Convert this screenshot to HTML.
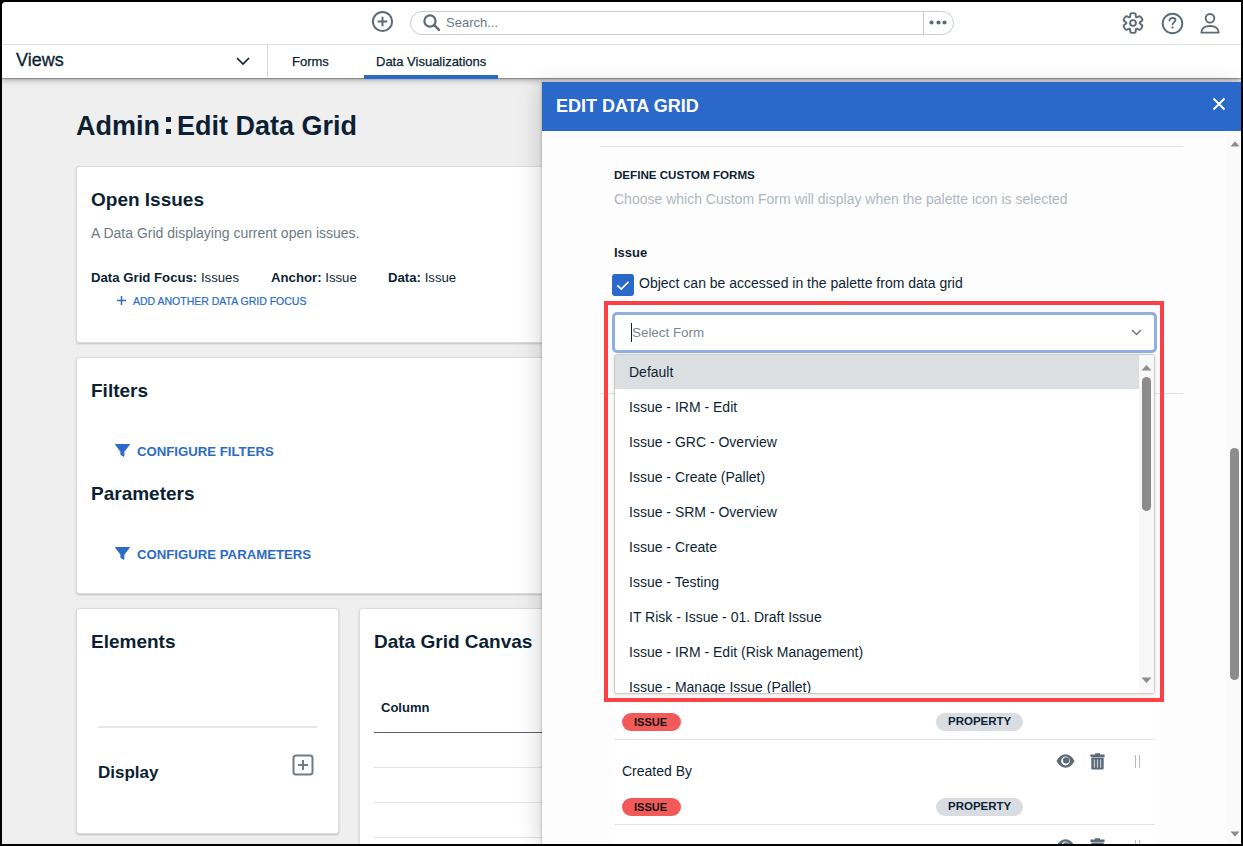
<!DOCTYPE html>
<html><head><meta charset="utf-8">
<style>
*{box-sizing:border-box;margin:0;padding:0}
html,body{width:1243px;height:846px;overflow:hidden;background:#000;font-family:"Liberation Sans",sans-serif}
.r{position:absolute}
.t{position:absolute;white-space:nowrap}
b{font-weight:bold}
</style></head><body>
<div class="r" style="left:0px;top:0px;width:1243px;height:846px;background:#000"></div>
<div class="r" style="left:2px;top:2px;width:1239px;height:842px;background:#efefef;border-top-left-radius:4px;overflow:hidden"></div>
<div class="r" style="left:2px;top:45px;width:1239px;height:33px;background:#fff;box-shadow:0 1px 1px rgba(0,0,0,.25), 0 2px 6px rgba(0,0,0,.32)"></div>
<div class="r" style="left:2px;top:2px;width:1239px;height:42px;background:#fff;border-top-left-radius:4px"></div>
<div class="r" style="left:2px;top:44px;width:1239px;height:1px;background:#dde1e4"></div>
<svg class="r" style="left:371px;top:10px" width="23" height="23" viewBox="0 0 23 23"><circle cx="11.5" cy="11.5" r="9.6" fill="none" stroke="#5b6b78" stroke-width="2"/><path d="M11.5 6.8v9.4M6.8 11.5h9.4" stroke="#5b6b78" stroke-width="2"/></svg>
<div class="r" style="left:410px;top:11px;width:544px;height:24px;border:1px solid #c9cdd1;border-radius:12px;background:#fff"></div>
<div class="r" style="left:923px;top:12px;width:1px;height:22px;background:#c9cdd1"></div>
<svg class="r" style="left:422px;top:13px" width="20" height="19" viewBox="0 0 20 19"><circle cx="8" cy="8" r="5.6" fill="none" stroke="#5b6b78" stroke-width="2.2"/><path d="M12.2 12.2l4.8 4.6" stroke="#5b6b78" stroke-width="2.4" stroke-linecap="round"/></svg>
<div class="t" style="left:446px;top:16.00px;font-size:13px;line-height:13px;font-weight:normal;color:#6b7884;">Search...</div>
<svg class="r" style="left:929.0px;top:19.5px" width="5" height="5" viewBox="0 0 5 5"><circle cx="2.5" cy="2.5" r="2.1" fill="#5b6b78"/></svg>
<svg class="r" style="left:935.7px;top:19.5px" width="5" height="5" viewBox="0 0 5 5"><circle cx="2.5" cy="2.5" r="2.1" fill="#5b6b78"/></svg>
<svg class="r" style="left:942.3px;top:19.5px" width="5" height="5" viewBox="0 0 5 5"><circle cx="2.5" cy="2.5" r="2.1" fill="#5b6b78"/></svg>
<svg class="r" style="left:1121px;top:11px" width="24" height="24" viewBox="0 0 24 24"><path d="M8.43 6.41 Q8.80 6.46 8.94 6.12 L9.01 5.95 Q9.15 5.61 9.24 4.22 L9.28 3.53 Q9.36 2.15 11.47 2.15 L12.53 2.15 Q14.64 2.15 14.72 3.53 L14.76 4.22 Q14.85 5.61 14.99 5.95 L15.06 6.12 Q15.20 6.46 15.57 6.41 L15.75 6.39 Q16.11 6.34 17.35 5.72 L17.97 5.41 Q19.21 4.79 20.27 6.62 L20.80 7.53 Q21.85 9.36 20.70 10.12 L20.12 10.50 Q18.96 11.27 18.74 11.56 L18.62 11.71 Q18.40 12.00 18.62 12.29 L18.74 12.44 Q18.96 12.73 20.12 13.50 L20.70 13.88 Q21.85 14.64 20.80 16.47 L20.27 17.38 Q19.21 19.21 17.97 18.59 L17.35 18.28 Q16.11 17.66 15.75 17.61 L15.57 17.59 Q15.20 17.54 15.06 17.88 L14.99 18.05 Q14.85 18.39 14.76 19.78 L14.72 20.47 Q14.64 21.85 12.53 21.85 L11.47 21.85 Q9.36 21.85 9.28 20.47 L9.24 19.78 Q9.15 18.39 9.01 18.05 L8.94 17.88 Q8.80 17.54 8.43 17.59 L8.25 17.61 Q7.89 17.66 6.65 18.28 L6.03 18.59 Q4.79 19.21 3.73 17.38 L3.20 16.47 Q2.15 14.64 3.30 13.88 L3.88 13.50 Q5.04 12.73 5.26 12.44 L5.38 12.29 Q5.60 12.00 5.38 11.71 L5.26 11.56 Q5.04 11.27 3.88 10.50 L3.30 10.12 Q2.15 9.36 3.20 7.53 L3.73 6.62 Q4.79 4.79 6.03 5.41 L6.65 5.72 Q7.89 6.34 8.25 6.39 Z" fill="none" stroke="#5b6b78" stroke-width="1.9" stroke-linejoin="round"/><circle cx="12" cy="12" r="2.9" fill="none" stroke="#5b6b78" stroke-width="1.9"/></svg>
<svg class="r" style="left:1161px;top:12px" width="23" height="23" viewBox="0 0 23 23"><circle cx="11.5" cy="11.5" r="9.8" fill="none" stroke="#5b6b78" stroke-width="1.9"/><path d="M8.5 8.6C8.5 6.9 9.8 6 11.5 6S14.5 6.9 14.5 8.3C14.5 10.1 11.6 10.4 11.6 12.3" fill="none" stroke="#5b6b78" stroke-width="1.9" stroke-linecap="round"/><rect x="10.4" y="14.4" width="2.3" height="2.1" rx="1" fill="#5b6b78"/></svg>
<svg class="r" style="left:1199px;top:12px" width="22" height="23" viewBox="0 0 22 23"><circle cx="11" cy="6.3" r="4.3" fill="none" stroke="#5b6b78" stroke-width="1.9"/><path d="M2.3 20.6c0-4 3.6-6.6 8.7-6.6s8.7 2.6 8.7 6.6z" fill="none" stroke="#5b6b78" stroke-width="1.9" stroke-linejoin="round"/></svg>
<div class="t" style="left:16px;top:51.00px;font-size:18px;line-height:18px;font-weight:normal;color:#0d1f33;-webkit-text-stroke:0.3px #0d1f33">Views</div>
<svg class="r" style="left:235px;top:56px" width="16" height="10" viewBox="0 0 16 10"><path d="M2 2l6 6 6-6" fill="none" stroke="#0d1f33" stroke-width="1.6"/></svg>
<div class="r" style="left:267px;top:45px;width:1px;height:32px;background:#d5d9dd"></div>
<div class="t" style="left:292px;top:55.00px;font-size:13px;line-height:13px;font-weight:normal;color:#0d1f33;-webkit-text-stroke:0.25px #0d1f33">Forms</div>
<div class="t" style="left:376px;top:55.00px;font-size:13px;line-height:13px;font-weight:normal;color:#0d1f33;-webkit-text-stroke:0.25px #0d1f33">Data Visualizations</div>
<div class="r" style="left:364px;top:75px;width:134px;height:4px;background:#2a69c9"></div>
<div class="t" style="left:76px;top:112.50px;font-size:27px;line-height:27px;font-weight:bold;color:#0d1f33;">Admin</div>
<div class="r" style="left:166px;top:117px;width:5px;height:5px;background:#0d1f33"></div>
<div class="r" style="left:166px;top:129px;width:5px;height:5px;background:#0d1f33"></div>
<div class="t" style="left:177px;top:112.50px;font-size:27px;line-height:27px;font-weight:bold;color:#0d1f33;">Edit Data Grid</div>
<div class="r" style="left:76px;top:166px;width:700px;height:177px;background:#fff;border:1px solid #dadde0;border-radius:3px;box-shadow:0 1px 2px rgba(0,0,0,.2)"></div>
<div class="t" style="left:91px;top:190.00px;font-size:19px;line-height:19px;font-weight:bold;color:#0d1f33;">Open Issues</div>
<div class="t" style="left:91px;top:226.00px;font-size:14px;line-height:14px;font-weight:normal;color:#6e7a85;">A Data Grid displaying current open issues.</div>
<div class="t" style="left:91px;top:270.90px;font-size:13.2px;line-height:13.2px;font-weight:normal;color:#0d1f33;"><b>Data Grid Focus:</b> Issues</div>
<div class="t" style="left:271px;top:270.90px;font-size:13.2px;line-height:13.2px;font-weight:normal;color:#0d1f33;"><b>Anchor:</b> Issue</div>
<div class="t" style="left:388px;top:270.90px;font-size:13.2px;line-height:13.2px;font-weight:normal;color:#0d1f33;"><b>Data:</b> Issue</div>
<svg class="r" style="left:116px;top:295px" width="11" height="11" viewBox="0 0 11 11"><path d="M5.5 1v9M1 5.5h9" stroke="#2d6bc7" stroke-width="1.5"/></svg>
<div class="t" style="left:133px;top:295.75px;font-size:10.5px;line-height:10.5px;font-weight:normal;color:#2d6bc7;-webkit-text-stroke:0.2px #2d6bc7">ADD ANOTHER DATA GRID FOCUS</div>
<div class="r" style="left:76px;top:357px;width:700px;height:237px;background:#fff;border:1px solid #dadde0;border-radius:3px;box-shadow:0 1px 2px rgba(0,0,0,.2)"></div>
<div class="t" style="left:91px;top:381.00px;font-size:19px;line-height:19px;font-weight:bold;color:#0d1f33;">Filters</div>
<svg class="r" style="left:115px;top:444px" width="15" height="13" viewBox="0 0 15 13"><path d="M0.5 0.5h14l-5.6 7.2v4.7l-3-1.8v-2.9z" fill="#2d6bc7" stroke="#2d6bc7" stroke-width="1" stroke-linejoin="round"/></svg>
<div class="t" style="left:137px;top:444.90px;font-size:13.2px;line-height:13.2px;font-weight:bold;color:#2d6bc7;">CONFIGURE FILTERS</div>
<div class="t" style="left:91px;top:484.00px;font-size:19px;line-height:19px;font-weight:bold;color:#0d1f33;">Parameters</div>
<svg class="r" style="left:115px;top:547px" width="15" height="13" viewBox="0 0 15 13"><path d="M0.5 0.5h14l-5.6 7.2v4.7l-3-1.8v-2.9z" fill="#2d6bc7" stroke="#2d6bc7" stroke-width="1" stroke-linejoin="round"/></svg>
<div class="t" style="left:137px;top:547.90px;font-size:13.2px;line-height:13.2px;font-weight:bold;color:#2d6bc7;">CONFIGURE PARAMETERS</div>
<div class="r" style="left:76px;top:608px;width:263px;height:226px;background:#fff;border:1px solid #dadde0;border-radius:3px;box-shadow:0 1px 2px rgba(0,0,0,.2)"></div>
<div class="t" style="left:91px;top:632.00px;font-size:19px;line-height:19px;font-weight:bold;color:#0d1f33;">Elements</div>
<div class="r" style="left:98px;top:726px;width:219px;height:2px;background:#e3e5e7"></div>
<div class="t" style="left:98px;top:764.00px;font-size:17px;line-height:17px;font-weight:bold;color:#0d1f33;">Display</div>
<svg class="r" style="left:292px;top:754px" width="23" height="23" viewBox="0 0 23 23"><rect x="1.5" y="1.5" width="19" height="19" rx="2.5" fill="none" stroke="#6f7c88" stroke-width="2"/><path d="M11 6v10M6 11h10" stroke="#6f7c88" stroke-width="2"/></svg>
<div class="r" style="left:359px;top:608px;width:700px;height:260px;background:#fff;border:1px solid #dadde0;border-radius:3px;box-shadow:0 1px 2px rgba(0,0,0,.2)"></div>
<div class="t" style="left:374px;top:632.00px;font-size:19px;line-height:19px;font-weight:bold;color:#0d1f33;">Data Grid Canvas</div>
<div class="t" style="left:381px;top:701.00px;font-size:13px;line-height:13px;font-weight:bold;color:#0d1f33;">Column</div>
<div class="r" style="left:374px;top:732px;width:300px;height:1px;background:#56616c"></div>
<div class="r" style="left:374px;top:767px;width:300px;height:1px;background:#e1e3e5"></div>
<div class="r" style="left:374px;top:802px;width:300px;height:1px;background:#e1e3e5"></div>
<div class="r" style="left:374px;top:837px;width:300px;height:1px;background:#e1e3e5"></div>
<div class="r" style="left:542px;top:82px;width:699px;height:762px;background:#fdfdfd;box-shadow:-1px 0 2px rgba(0,0,0,.16), -6px 0 18px rgba(0,0,0,.13)"></div>
<div class="r" style="left:542px;top:82px;width:699px;height:49px;background:#2a69c9"></div>
<div class="t" style="left:556px;top:97.00px;font-size:18px;line-height:18px;font-weight:bold;color:#fff;">EDIT DATA GRID</div>
<svg class="r" style="left:1212px;top:97px" width="14" height="14" viewBox="0 0 14 14"><path d="M1.5 1.5l11 11M12.5 1.5l-11 11" stroke="#fff" stroke-width="2"/></svg>
<div class="r" style="left:1227px;top:131px;width:13px;height:713px;background:#fafafa"></div>
<svg class="r" style="left:1229.5px;top:139.5px" width="10" height="7" viewBox="0 0 10 7"><path d="M0.5 6.5L5 1.2l4.5 5.3z" fill="#8c8c8c"/></svg>
<svg class="r" style="left:1229.5px;top:830.5px" width="10" height="7" viewBox="0 0 10 7"><path d="M0.5 0.5L5 5.8l4.5-5.3z" fill="#8c8c8c"/></svg>
<div class="r" style="left:1230px;top:448px;width:9px;height:232px;background:#8c8c8c;border-radius:4.5px"></div>
<div class="r" style="left:600px;top:146px;width:583px;height:1px;background:#dfe2e5"></div>
<div class="t" style="left:614px;top:169.00px;font-size:11.6px;line-height:11.6px;font-weight:bold;color:#0d1f33;">DEFINE CUSTOM FORMS</div>
<div class="t" style="left:614px;top:192.00px;font-size:14px;line-height:14px;font-weight:normal;color:#b1b7bd;">Choose which Custom Form will display when the palette icon is selected</div>
<div class="t" style="left:614px;top:246.00px;font-size:13px;line-height:13px;font-weight:bold;color:#0d1f33;">Issue</div>
<div class="r" style="left:612px;top:274px;width:22px;height:22px;background:#2a69c9;border-radius:3px"></div>
<svg class="r" style="left:612px;top:274px" width="22" height="22" viewBox="0 0 22 22"><path d="M5.3 11.3l4 3.8 7.2-7.2" fill="none" stroke="#fff" stroke-width="1.7"/></svg>
<div class="t" style="left:639px;top:276.00px;font-size:14px;line-height:14px;font-weight:normal;color:#0d1f33;">Object can be accessed in the palette from data grid</div>
<div class="r" style="left:600px;top:393px;width:583px;height:1px;background:#dfe2e5"></div>
<div class="r" style="left:613px;top:697px;width:542px;height:147px;background:#fff"></div>
<div class="r" style="left:622px;top:713px;width:59px;height:18px;background:#f25a5a;border-radius:9px"></div>
<div class="t" style="left:634px;top:716.50px;font-size:11px;line-height:11px;font-weight:bold;color:#111;">ISSUE</div>
<div class="r" style="left:936px;top:713px;width:87px;height:18px;background:#d9dde1;border-radius:9px"></div>
<div class="t" style="left:948px;top:716.25px;font-size:11.5px;line-height:11.5px;font-weight:bold;color:#0d1f33;">PROPERTY</div>
<div class="r" style="left:614px;top:739px;width:541px;height:1px;background:#e3e5e7"></div>
<div class="t" style="left:622px;top:764.00px;font-size:14px;line-height:14px;font-weight:normal;color:#0d1f33;">Created By</div>
<svg class="r" style="left:1056px;top:753px" width="19" height="16" viewBox="0 0 19 16"><path d="M0.5 8C2.8 3.6 5.8 1.3 9.5 1.3S16.2 3.6 18.5 8C16.2 12.4 13.2 14.7 9.5 14.7S2.8 12.4 0.5 8z" fill="#5b6b78"/><circle cx="9.5" cy="8" r="4.4" fill="#fff"/><circle cx="10.1" cy="7.4" r="3.1" fill="#5b6b78"/></svg>
<svg class="r" style="left:1089.5px;top:752.5px" width="15" height="17" viewBox="0 0 15 17"><path d="M0.4 1.6h14.2v2.4H0.4z M5 0.2h5v1.6H5z M1.3 4.6h12.4v10.6a1.3 1.3 0 0 1-1.3 1.3H2.6a1.3 1.3 0 0 1-1.3-1.3z" fill="#5b6b78"/><path d="M4.4 6.5v8.2M7.5 6.5v8.2M10.6 6.5v8.2" stroke="#c9ced3" stroke-width="1.1"/></svg>
<div class="r" style="left:1135px;top:755px;width:1.3px;height:13px;background:#b5bdc5"></div>
<div class="r" style="left:1139px;top:755px;width:1.3px;height:13px;background:#b5bdc5"></div>
<div class="r" style="left:622px;top:798px;width:59px;height:18px;background:#f25a5a;border-radius:9px"></div>
<div class="t" style="left:634px;top:801.50px;font-size:11px;line-height:11px;font-weight:bold;color:#111;">ISSUE</div>
<div class="r" style="left:936px;top:798px;width:87px;height:18px;background:#d9dde1;border-radius:9px"></div>
<div class="t" style="left:948px;top:801.25px;font-size:11.5px;line-height:11.5px;font-weight:bold;color:#0d1f33;">PROPERTY</div>
<div class="r" style="left:614px;top:824px;width:541px;height:1px;background:#e3e5e7"></div>
<svg class="r" style="left:1056px;top:838px" width="19" height="16" viewBox="0 0 19 16"><path d="M0.5 8C2.8 3.6 5.8 1.3 9.5 1.3S16.2 3.6 18.5 8C16.2 12.4 13.2 14.7 9.5 14.7S2.8 12.4 0.5 8z" fill="#5b6b78"/><circle cx="9.5" cy="8" r="4.4" fill="#fff"/><circle cx="10.1" cy="7.4" r="3.1" fill="#5b6b78"/></svg>
<svg class="r" style="left:1089.5px;top:837.5px" width="15" height="17" viewBox="0 0 15 17"><path d="M0.4 1.6h14.2v2.4H0.4z M5 0.2h5v1.6H5z M1.3 4.6h12.4v10.6a1.3 1.3 0 0 1-1.3 1.3H2.6a1.3 1.3 0 0 1-1.3-1.3z" fill="#5b6b78"/><path d="M4.4 6.5v8.2M7.5 6.5v8.2M10.6 6.5v8.2" stroke="#c9ced3" stroke-width="1.1"/></svg>
<div class="r" style="left:1135px;top:840px;width:1.3px;height:13px;background:#b5bdc5"></div>
<div class="r" style="left:1139px;top:840px;width:1.3px;height:13px;background:#b5bdc5"></div>
<div class="r" style="left:604px;top:301px;width:560px;height:401px;border:4px solid #fd4043"></div>
<div class="r" style="left:612px;top:312px;width:545px;height:41px;background:#fff;border:3px solid #8fb0e1;border-radius:5px"></div>
<div class="r" style="left:631px;top:323px;width:1.3px;height:19px;background:#0d1f33"></div>
<div class="t" style="left:632px;top:325.80px;font-size:13.4px;line-height:13.4px;font-weight:normal;color:#7b8691;">Select Form</div>
<svg class="r" style="left:1131px;top:329px" width="11" height="7" viewBox="0 0 11 7"><path d="M1 1l4.5 4.5L10 1" fill="none" stroke="#68737d" stroke-width="1.4"/></svg>
<div class="r" style="left:614px;top:354px;width:541px;height:340px;background:#fff;border:1px solid #cbcbcb;border-radius:3px;box-shadow:0 1px 4px rgba(0,0,0,.12)"></div>
<div class="r" style="left:615px;top:355px;width:524px;height:34px;background:#dcdfe2"></div>
<div class="r" style="left:1139px;top:355px;width:15px;height:338px;background:#f8f8f8"></div>
<svg class="r" style="left:1141px;top:364px" width="11" height="7" viewBox="0 0 11 7"><path d="M0.5 6.5L5.5 1l5 5.5z" fill="#8c8c8c"/></svg>
<svg class="r" style="left:1141px;top:677px" width="11" height="7" viewBox="0 0 11 7"><path d="M0.5 0.5L5.5 6l5-5.5z" fill="#8c8c8c"/></svg>
<div class="r" style="left:1142px;top:377px;width:9px;height:134px;background:#8c8c8c;border-radius:4.5px"></div>
<div class="r" style="left:614px;top:354px;width:525px;height:339px;overflow:hidden">
<div class="t" style="left:15px;top:11.0px;font-size:14px;line-height:14px;color:#0d1f33">Default</div>
<div class="t" style="left:15px;top:46.0px;font-size:14px;line-height:14px;color:#0d1f33">Issue - IRM - Edit</div>
<div class="t" style="left:15px;top:81.0px;font-size:14px;line-height:14px;color:#0d1f33">Issue - GRC - Overview</div>
<div class="t" style="left:15px;top:116.0px;font-size:14px;line-height:14px;color:#0d1f33">Issue - Create (Pallet)</div>
<div class="t" style="left:15px;top:151.0px;font-size:14px;line-height:14px;color:#0d1f33">Issue - SRM - Overview</div>
<div class="t" style="left:15px;top:186.0px;font-size:14px;line-height:14px;color:#0d1f33">Issue - Create</div>
<div class="t" style="left:15px;top:221.0px;font-size:14px;line-height:14px;color:#0d1f33">Issue - Testing</div>
<div class="t" style="left:15px;top:256.0px;font-size:14px;line-height:14px;color:#0d1f33">IT Risk - Issue - 01. Draft Issue</div>
<div class="t" style="left:15px;top:291.0px;font-size:14px;line-height:14px;color:#0d1f33">Issue - IRM - Edit (Risk Management)</div>
<div class="t" style="left:15px;top:326.0px;font-size:14px;line-height:14px;color:#0d1f33">Issue - Manage Issue (Pallet)</div>
</div>
<div class="r" style="left:0px;top:0px;width:1243px;height:2px;background:#000"></div>
<div class="r" style="left:0px;top:844px;width:1243px;height:2px;background:#000"></div>
<div class="r" style="left:0px;top:0px;width:2px;height:846px;background:#000"></div>
<div class="r" style="left:1241px;top:0px;width:2px;height:846px;background:#000"></div>
</body></html>
